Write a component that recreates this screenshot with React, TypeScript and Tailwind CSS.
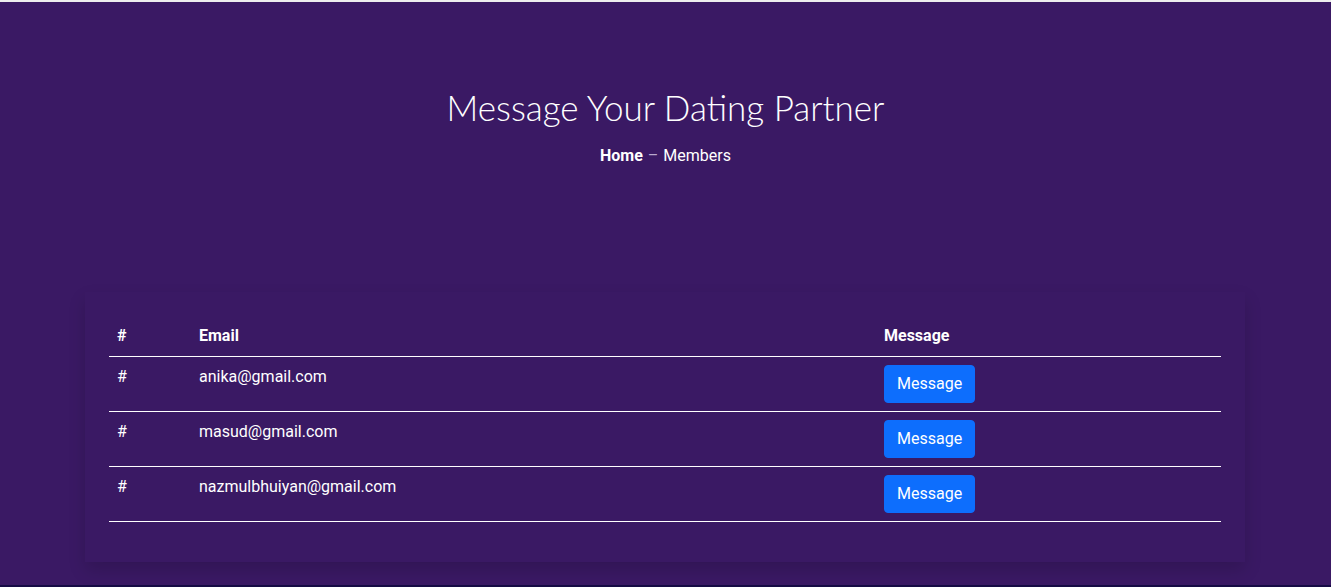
const members = [
  { id: "#", email: "anika@gmail.com" },
  { id: "#", email: "masud@gmail.com" },
  { id: "#", email: "nazmulbhuiyan@gmail.com" },
];

export default function App() {
  return (
    <div className="min-h-[587px] bg-[#3a1964] font-['Roboto',sans-serif] text-white">
      <div className="h-[2px] bg-[#eeeeee]" />
      <section className="flex h-[583px] flex-col items-center">
        <h1 className="mt-[83px] font-['Lato',sans-serif] text-[35px] font-light leading-[44px]">
          Message Your Dating Partner
        </h1>
        <p className="mt-[15px] text-base leading-6">
          <span className="font-bold">Home</span>
          <span className="mx-[5px] text-[#b9a9cf]">–</span>
          <span>Members</span>
        </p>

        <div className="mr-px mt-[124px] w-[1160px] bg-[#3a1964] p-6 shadow-[0_8px_16px_rgba(0,0,0,0.15)]">
          <table className="mb-4 w-full border-collapse text-left text-base leading-6">
            <thead>
              <tr className="border-b border-white">
                <th className="w-[82px] p-2 font-bold">#</th>
                <th className="w-[685px] p-2 font-bold">Email</th>
                <th className="p-2 font-bold">Message</th>
              </tr>
            </thead>
            <tbody>
              {members.map((m) => (
                <tr key={m.email} className="border-b border-white align-top">
                  <td className="p-2">{m.id}</td>
                  <td className="p-2">{m.email}</td>
                  <td className="p-2">
                    <button className="h-[38px] rounded-[4px] border border-[#0d6efd] bg-[#0d6efd] px-3 text-base text-white">
                      Message
                    </button>
                  </td>
                </tr>
              ))}
            </tbody>
          </table>
        </div>
      </section>
      <div className="h-[2px] bg-[#160b45]" />
    </div>
  );
}
